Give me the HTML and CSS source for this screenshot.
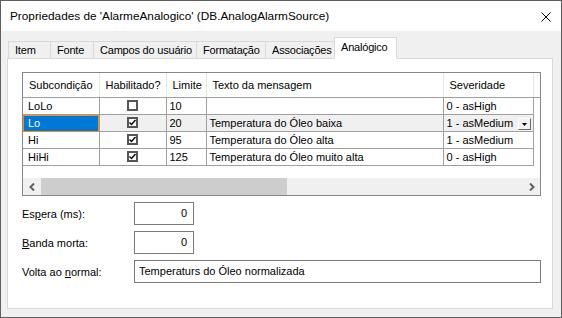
FILE: index.html
```html
<!DOCTYPE html>
<html lang="pt">
<head>
  <meta charset="UTF-8" />
  <title>Propriedades de 'AlarmeAnalogico'</title>
  <link rel="stylesheet" href="styles.css">
</head>
<body>
  <div class="dialog">
    <div class="titlebar">
      <span class="title">Propriedades de 'AlarmeAnalogico' (DB.AnalogAlarmSource)</span>
      <svg class="close" width="10" height="10" viewBox="0 0 10 10"><path d="M0.5 0.5L9.5 9.5M9.5 0.5L0.5 9.5" stroke="#000" stroke-width="1"/></svg>
    </div>

    <div class="body">
      <div class="tabs">
        <div class="tab t-item">Item</div>
        <div class="tab t-fonte">Fonte</div>
        <div class="tab t-campos">Campos do usuário</div>
        <div class="tab t-format">Formatação</div>
        <div class="tab t-assoc">Associações</div>
        <div class="tab t-analog active">Analógico</div>
      </div>

      <div class="panel">
        <div class="grid">
          <table>
            <colgroup>
              <col class="c-sub"><col class="c-hab"><col class="c-lim"><col class="c-txt"><col class="c-sev"><col>
            </colgroup>
            <thead>
              <tr><th>Subcondição</th><th>Habilitado?</th><th>Limite</th><th>Texto da mensagem</th><th>Severidade</th><th></th></tr>
            </thead>
            <tbody>
              <tr>
                <td class="name">LoLo</td>
                <td class="chk"><span class="box"></span></td>
                <td>10</td>
                <td></td>
                <td>0 - asHigh</td>
                <td class="filler"></td>
              </tr>
              <tr class="current">
                <td class="name selected">Lo</td>
                <td class="chk"><span class="box checked"><svg width="7" height="7" viewBox="0 0 7 7"><path d="M0.5 3.5L2.5 5.5L6.5 1" fill="none" stroke="#000" stroke-width="1.4"/></svg></span></td>
                <td>20</td>
                <td>Temperatura do Óleo baixa</td>
                <td class="sev">1 - asMedium <span class="drop"><svg width="5" height="3" viewBox="0 0 5 3"><path d="M0 0H5L2.5 3Z" fill="#000"/></svg></span></td>
                <td class="filler"></td>
              </tr>
              <tr>
                <td class="name">Hi</td>
                <td class="chk"><span class="box checked"><svg width="7" height="7" viewBox="0 0 7 7"><path d="M0.5 3.5L2.5 5.5L6.5 1" fill="none" stroke="#000" stroke-width="1.4"/></svg></span></td>
                <td>95</td>
                <td>Temperatura do Óleo alta</td>
                <td>1 - asMedium</td>
                <td class="filler"></td>
              </tr>
              <tr>
                <td class="name">HiHi</td>
                <td class="chk"><span class="box checked"><svg width="7" height="7" viewBox="0 0 7 7"><path d="M0.5 3.5L2.5 5.5L6.5 1" fill="none" stroke="#000" stroke-width="1.4"/></svg></span></td>
                <td>125</td>
                <td>Temperatura do Óleo muito alta</td>
                <td>0 - asHigh</td>
                <td class="filler"></td>
              </tr>
            </tbody>
          </table>
          <div class="grid-space"></div>
          <div class="hscroll">
            <span class="arrow"><svg width="7" height="8" viewBox="0 0 7 8"><path d="M5 0.5L1.5 4L5 7.5" fill="none" stroke="#606060" stroke-width="2"/></svg></span>
            <span class="thumb"></span>
            <span class="track"></span>
            <span class="arrow"><svg width="7" height="8" viewBox="0 0 7 8"><path d="M2 0.5L5.5 4L2 7.5" fill="none" stroke="#606060" stroke-width="2"/></svg></span>
          </div>
        </div>

        <div class="field">
          <label>Es<u>p</u>era (ms):</label>
          <div class="input num">0</div>
        </div>
        <div class="field">
          <label><u>B</u>anda morta:</label>
          <div class="input num">0</div>
        </div>
        <div class="field">
          <label>Volta ao <u>n</u>ormal:</label>
          <div class="input wide">Temperaturs do Óleo normalizada</div>
        </div>
      </div>
    </div>
  </div>
</body>
</html>
```

FILE: styles.css
```css
body { margin: 0; background: #fff; font-family: "Liberation Sans", Arial, sans-serif; font-size: 11px; color: #000; }
.dialog { width: 562px; height: 318px; box-sizing: border-box; border: 1px solid #5f5f5f; display: flex; flex-direction: column; background: #f0f0f0; }

.titlebar { height: 30px; background: #fff; display: flex; align-items: center; justify-content: space-between; padding: 0 10px 0 9px; }
.title { font-size: 11.8px; }
.close { margin-top: 1px; }

.body { flex: 1; padding: 7px 8px 8px 6px; display: flex; flex-direction: column; }
.tabs { display: flex; align-items: flex-end; height: 21px; padding-left: 1px; margin-bottom: -1px; position: relative; z-index: 1; }
.tab { height: 16px; line-height: 17px; padding: 0 0 0 6px; box-sizing: content-box; border: 1px solid #d9d9d9; background: #f0f0f0; margin-left: -1px; white-space: nowrap; letter-spacing: -0.2px; }
.tab:first-child { margin-left: 0; }
.tab.active { height: 20px; line-height: 18px; background: #fff; border-bottom-color: #fff; }
.t-item { width: 35px; }
.t-fonte { width: 36px; }
.t-campos { width: 96px; }
.t-format { width: 62px; }
.t-assoc { width: 62px; }
.t-analog { width: 55px; }

.panel { flex: 1; background: #fff; border: 1px solid #d9d9d9; padding: 13px 0 0 14px; }

.grid { width: 519px; height: 124px; box-sizing: border-box; border: 1px solid #828790; display: flex; flex-direction: column; }
table { border-collapse: collapse; table-layout: fixed; width: 517px; }
.c-sub { width: 76px; }
.c-hab { width: 67px; }
.c-lim { width: 40px; }
.c-txt { width: 237px; }
.c-sev { width: 90px; }
th { height: 24px; font-weight: normal; text-align: left; padding: 0 0 0 6px; border-right: 1px solid #e5e5e5; border-bottom: 1px solid #a0a0a0; white-space: nowrap; }
th:last-child { border-right: none; }
td { height: 16px; padding: 0 0 0 3px; border-right: 1px solid #a0a0a0; border-bottom: 1px solid #a0a0a0; white-space: nowrap; overflow: hidden; }
td.filler { border: none; }
td.name { padding-left: 5px; }
tr.current td { background: #f0f0f0; }
tr.current td.filler { background: #fff; }
tr.current td.selected { background: #0078d7; color: #fff; outline: 1px solid #ff8c00; outline-offset: -1px; }
td.chk { text-align: center; padding: 0; }
.box { display: inline-block; width: 11px; height: 11px; box-sizing: border-box; border: 2px solid #555; background: #fff; vertical-align: middle; position: relative; top: -1px; }
.box.checked svg { display: block; }
td.sev { position: relative; }
.drop { position: absolute; right: 2px; top: 3px; width: 13px; height: 12px; box-sizing: border-box; background: #f0f0f0; border: 1px solid; border-color: #fff #696969 #696969 #fff; display: flex; align-items: center; justify-content: center; }

.grid-space { flex: 1; }
.hscroll { height: 17px; display: flex; background: #f0f0f0; }
.hscroll .arrow { width: 18px; display: flex; align-items: center; justify-content: center; }
.hscroll .thumb { width: 246px; background: #cdcdcd; }
.hscroll .track { flex: 1; }

.field { display: flex; align-items: center; margin-top: 6px; }
.field:first-of-type { margin-top: 7px; }
.field label { width: 112px; }
.input { height: 23px; line-height: 21px; box-sizing: border-box; border: 1px solid #7a7a7a; padding: 0 6px 0 4px; }
.input.num { width: 60px; text-align: right; }
.input.wide { width: 407px; }
u { text-decoration: underline; }
```
